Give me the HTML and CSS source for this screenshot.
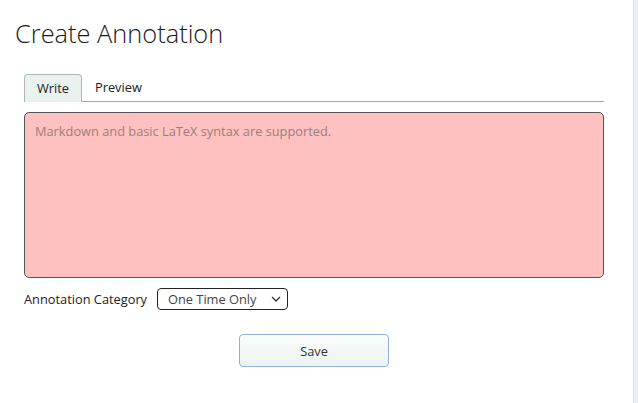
FILE: index.html
```html
<!DOCTYPE html>
<html>
<head>
<meta charset="utf-8">
<link rel="stylesheet" href="styles.css">
</head>
<body>
<div class="page">
  <main class="main">
    <h1 class="title">Create Annotation</h1>
    <div class="form">
      <div class="tabs">
        <div class="tab active">Write</div>
        <div class="tab">Preview</div>
      </div>
      <textarea class="editor" placeholder="Markdown and basic LaTeX syntax are supported."></textarea>
      <div class="category">
        <label class="cat-label">Annotation Category</label>
        <div class="select">
          <span>One Time Only</span>
          <svg width="10" height="6" viewBox="0 0 10 6"><path d="M1 1 L5 5 L9 1" fill="none" stroke="#333" stroke-width="1.3"/></svg>
        </div>
      </div>
      <div class="actions">
        <button class="save">Save</button>
      </div>
    </div>
  </main>
  <aside class="side"></aside>
</div>
</body>
</html>
```
FILE: styles.css
```css
html, body {
  margin: 0;
  padding: 0;
  background: #fff;
  font-family: "Open Sans", "Liberation Sans", sans-serif;
  color: #222;
}
.page {
  display: flex;
  width: 638px;
  height: 403px;
  overflow: hidden;
}
.main {
  flex: 1;
  padding: 0 0 0 24px;
}
.side {
  width: 4px;
  background: #e9f1f5;
  border-left: 1px solid #d6e4ec;
}
.title {
  margin: 15px 0 0 -9px;
  font-size: 25.4px;
  font-weight: 300;
  line-height: 36px;
  color: #1a1a1a;
}
.form {
  width: 580px;
  margin-top: 23px;
}
.tabs {
  display: flex;
  border-bottom: 1px solid #a8a8a8;
  height: 27px;
}
.tab {
  font-size: 12.8px;
  line-height: 27px;
  padding: 0 13px 0 13px;
  color: #222;
}
.tab.active {
  background: #e8f3f0;
  border: 1px solid #b5b5b5;
  border-bottom: none;
  border-radius: 4px 4px 0 0;
  padding: 0 12px;
  width: 32px;
  line-height: 27px;
  height: 27px;
  box-sizing: content-box;
  text-align: center;
}
.editor {
  display: block;
  box-sizing: border-box;
  width: 580px;
  height: 166px;
  margin-top: 10px;
  background: #ffc0c0;
  border: 1px solid #555;
  border-radius: 5px;
  padding: 9px 10px;
  font-family: "Open Sans", "Liberation Sans", sans-serif;
  font-size: 12.8px;
  resize: none;
  outline: none;
}
.editor::placeholder {
  color: #998080;
}
.category {
  display: flex;
  align-items: center;
  margin-top: 10px;
  height: 21px;
}
.cat-label {
  font-size: 12.8px;
  color: #222;
  margin-right: 10px;
}
.select {
  box-sizing: border-box;
  width: 131px;
  height: 22px;
  border: 1px solid #222;
  border-radius: 4px;
  display: flex;
  align-items: center;
  justify-content: space-between;
  padding: 0 6px 0 10px;
  font-size: 12.8px;
  color: #444;
}
.actions {
  display: flex;
  justify-content: center;
  margin-top: 25px;
}
.save {
  width: 150px;
  height: 33px;
  border: 1px solid #8fb3dd;
  border-radius: 4px;
  background: linear-gradient(#fbfdfc, #ebf3f1);
  font-family: "Open Sans", "Liberation Sans", sans-serif;
  font-size: 12.8px;
  color: #333;
  margin-left: 0;
}
```
